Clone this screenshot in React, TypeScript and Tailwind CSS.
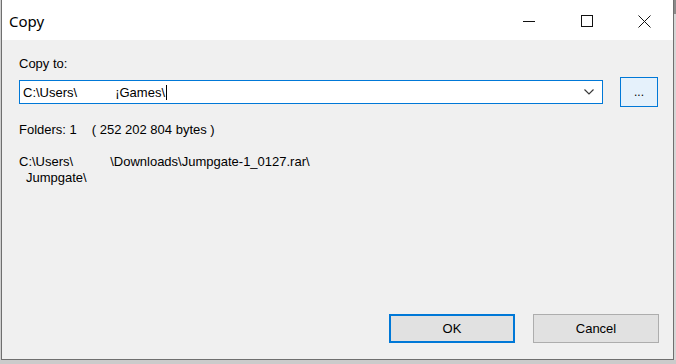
import React from "react";

const body = { fontFamily: '"Liberation Sans", Arial, sans-serif' };

export default function App() {
  return (
    <div className="w-[676px] h-[364px] bg-[#d3d3d3] flex flex-col" style={body}>
      <div className="flex">
        <div className="w-px h-[360px] bg-[#cfcfcf]" />
        <div className="w-[673px] h-[360px] border-l border-r border-b border-[#6f6f6f] flex flex-col">
          {/* title bar */}
          <div className="h-[40px] bg-white flex items-start">
            <div
              className="pl-[7px] pt-[11px] text-[15px] leading-[20px] text-black flex-1"
              style={{ fontFamily: '"Noto Sans", "Open Sans", sans-serif' }}
            >
              Copy
            </div>
            <div className="w-[58px] h-[40px] flex items-center justify-center pt-[2px]">
              <svg width="12" height="12" viewBox="0 0 12 12">
                <line x1="0" y1="6.5" x2="12" y2="6.5" stroke="#111" strokeWidth="1" />
              </svg>
            </div>
            <div className="w-[58px] h-[40px] flex items-center justify-center pt-[2px]">
              <svg width="12" height="12" viewBox="0 0 12 12">
                <rect x="0.5" y="0.5" width="11" height="11" fill="none" stroke="#111" strokeWidth="1" />
              </svg>
            </div>
            <div className="w-[57px] h-[40px] flex items-center justify-center pt-[2px]">
              <svg width="13" height="13" viewBox="0 0 13 13">
                <path d="M0.5 0.5 L12.5 12.5 M12.5 0.5 L0.5 12.5" stroke="#111" strokeWidth="1" fill="none" />
              </svg>
            </div>
          </div>
          {/* content */}
          <div className="flex-1 bg-[#f0f0f0] flex flex-col pl-[17px] pr-[14px] pb-[16px] text-[13px] leading-[15px] text-black">
            <div className="mt-[16px]">Copy to:</div>
            <div className="flex items-start mt-[6px] gap-[17px]">
              <div className="mt-[3px] w-[584px] h-[24px] border border-[#0078d7] bg-white flex items-center pl-[3px] pr-[4px]">
                <span>C:\Users\</span>
                <span className="w-[38px]" />
                <span>¡Games\</span>
                <span className="w-px h-[15px] bg-black ml-px" />
                <span className="flex-1" />
                <svg width="10" height="6" viewBox="0 0 10 6" className="mr-[4px]">
                  <polyline points="0.5,0.5 5,5 9.5,0.5" fill="none" stroke="#3a3a3a" strokeWidth="1.2" />
                </svg>
              </div>
              <div className="w-[38px] h-[30px] border border-[#0078d7] bg-[#e5f1fb] flex items-center justify-center">
                <span className="text-[12px]">...</span>
              </div>
            </div>
            <div className="mt-[15px] flex">
              <span>Folders: 1</span>
              <span className="ml-[15px]">( 252 202 804 bytes )</span>
            </div>
            <div className="mt-[17px] flex leading-[16px]">
              <span>C:\Users\</span>
              <span className="w-[37px]" />
              <span>\Downloads\Jumpgate-1_0127.rar\</span>
            </div>
            <div className="pl-[7px] leading-[16px]">Jumpgate\</div>
            <div className="mt-auto flex justify-end gap-[18px]">
              <div className="w-[126px] h-[29px] border-2 border-[#0078d7] bg-[#e1e1e1] flex items-center justify-center">
                OK
              </div>
              <div className="w-[126px] h-[29px] border border-[#adadad] bg-[#e1e1e1] flex items-center justify-center">
                Cancel
              </div>
            </div>
          </div>
        </div>
        <div className="w-[2px] h-[360px] flex flex-col">
          <div className="h-[14px] bg-[#8a8a8a]" />
          <div className="flex-1 bg-[#d6d6d6]" />
        </div>
      </div>
      <div className="flex-1 bg-[#cbcbcb]" />
    </div>
  );
}
